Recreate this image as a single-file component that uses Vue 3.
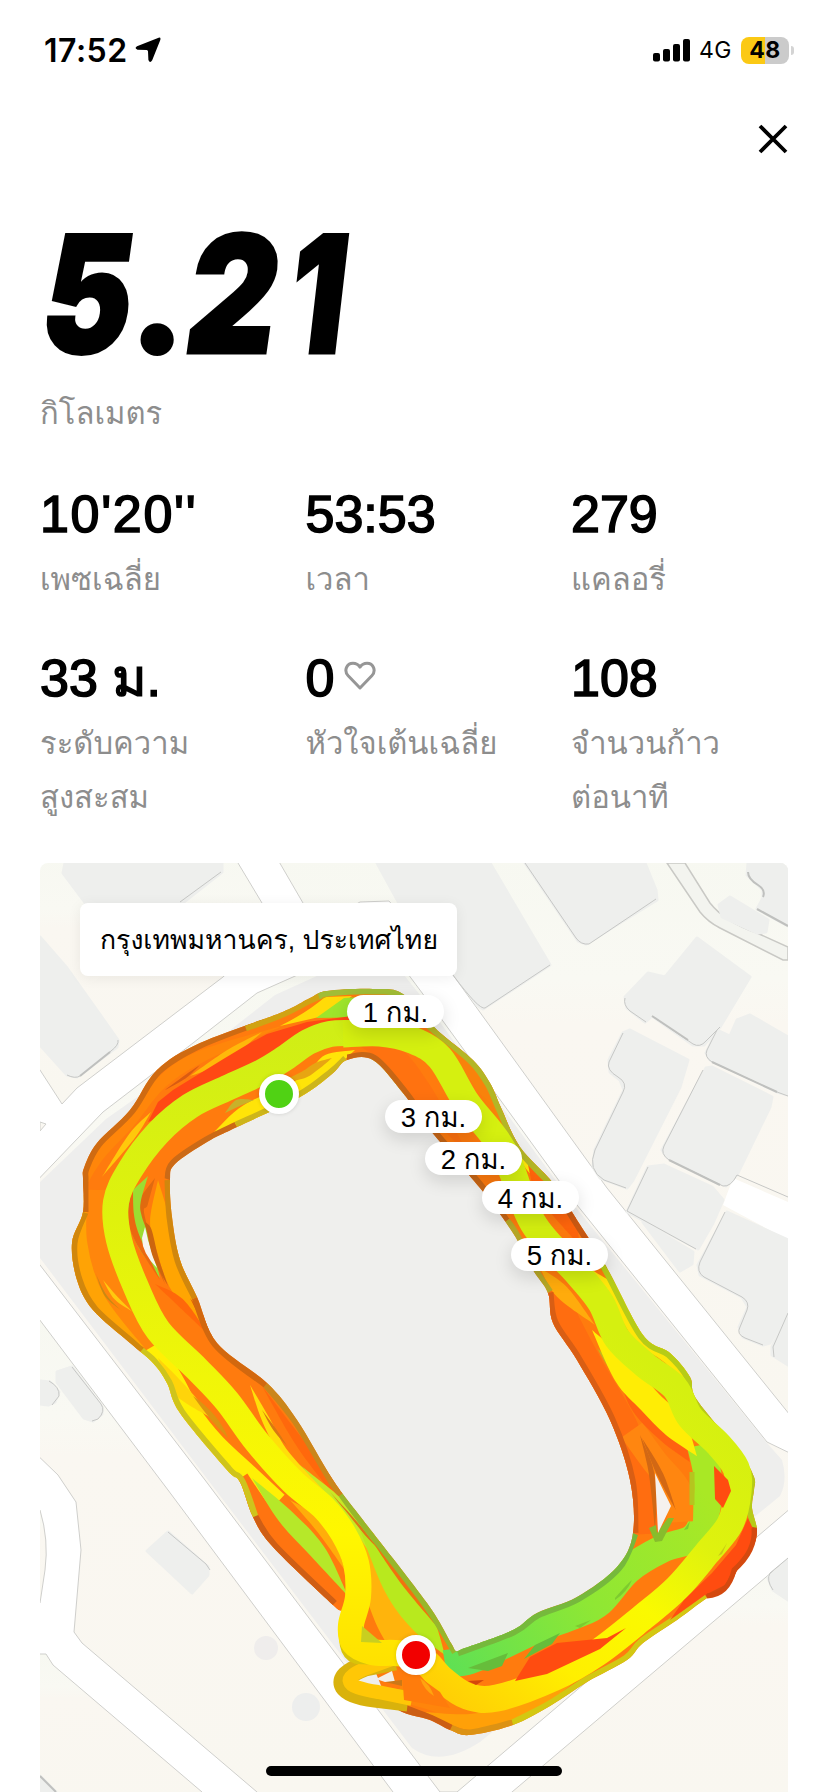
<script setup>
const stats = [
  { value: "10'20''", wide: true, label: ['เพซเฉลี่ย'] },
  { value: '53:53', label: ['เวลา'] },
  { value: '279', label: ['แคลอรี่'] },
  { value: '33 ม.', label: ['ระดับความ', 'สูงสะสม'] },
  { value: '0', heart: true, label: ['หัวใจเต้นเฉลี่ย'] },
  { value: '108', label: ['จำนวนก้าว', 'ต่อนาที'] },
]

const pins = [
  { text: '1 กม.', x: 307, y: 132 },
  { text: '3 กม.', x: 345, y: 237 },
  { text: '2 กม.', x: 385, y: 279 },
  { text: '4 กม.', x: 442, y: 318 },
  { text: '5 กม.', x: 471, y: 375 },
]

const parse = (str) => str.trim().split(/\s+/).map((s) => s.split(',').map(Number))

// Smooth curve (Catmull-Rom) through a flat "x,y x,y" list
function curve(str, closed = false) {
  const p = typeof str === 'string' ? parse(str) : str
  const n = p.length
  const at = (i) => (closed ? p[(i + n) % n] : p[Math.max(0, Math.min(n - 1, i))])
  let d = `M${p[0]}`
  for (let i = 0; i < (closed ? n : n - 1); i++) {
    const [a, b, c, e] = [at(i - 1), at(i), at(i + 1), at(i + 2)]
    d += `C${b[0] + (c[0] - a[0]) / 6},${b[1] + (c[1] - a[1]) / 6} ${c[0] - (e[0] - b[0]) / 6},${c[1] - (e[1] - b[1]) / 6} ${c[0]},${c[1]}`
  }
  return closed ? d + 'Z' : d
}

// Brush stroke that narrows to a point at both ends
function taper(str, width) {
  const p = parse(str)
  const n = p.length
  const side = (sign) =>
    p.map((q, i) => {
      const a = p[Math.max(0, i - 1)]
      const b = p[Math.min(n - 1, i + 1)]
      const len = Math.hypot(b[0] - a[0], b[1] - a[1])
      const h = (i === 0 || i === n - 1 ? 0 : width / 2) * sign
      return [q[0] - ((b[1] - a[1]) / len) * h, q[1] + ((b[0] - a[0]) / len) * h]
    })
  return curve(side(1)) + curve(side(-1).reverse()).replace('M', 'L') + 'Z'
}

const outer = curve('327,991 373,989 403,994 437,1030 473,1060 490,1083 502,1110 520,1147 553,1183 577,1220 607,1268 643,1335 670,1353 690,1377 697,1400 740,1453 754,1477 754,1490 752,1508 757,1530 753,1547 740,1565 727,1588 707,1598 677,1620 643,1643 627,1660 587,1682 550,1706 513,1725 470,1735 450,1730 430,1720 393,1706 370,1660 345,1615 333,1605 273,1547 253,1517 240,1482 227,1470 180,1413 167,1383 153,1363 130,1343 93,1310 77,1280 72,1243 83,1212 83,1180 84,1168 97,1143 130,1110 157,1070 200,1043 280,1013 310,998', true)
const inner = curve('347,1060 373,1060 403,1093 430,1130 480,1188 513,1233 533,1270 548,1293 553,1323 577,1360 610,1420 630,1480 633,1533 617,1567 577,1597 537,1613 513,1630 465,1648 456,1651 451,1643 427,1603 363,1520 333,1480 297,1420 267,1383 217,1343 197,1297 180,1260 172,1217 170,1180 175,1164 207,1142 237,1127 300,1097 332,1074', true)

const buildings = [
  '65,863 63,873 87,905 180,905 222,872 222,863',
  '40,937 67,968 118,1040 117,1047 77,1077 67,1075 40,1045',
  '377,863 490,863 550,965 483,1009 478,1006 453,972 400,905',
  '525,863 578,941 586,944 657,900 656,890 645,863',
  '748,863 747,875 763,890 763,898 757,909 788,926 788,863',
  '719,905 730,897 768,920 766,932 757,933 722,917',
  '697,938 750,977 720,1027 704,1045 693,1045 652,1016 645,1022 627,1008 625,997 648,973 665,977',
  '630,1030 688,1060 680,1087 633,1180 627,1188 600,1178 593,1167 595,1150 624,1090 620,1080 610,1072 609,1060 623,1033',
  '737,1020 750,1015 788,1037 788,1095 777,1092 710,1060 706,1053 717,1030 730,1036',
  '706,1068 712,1067 772,1097 770,1107 737,1175 726,1186 667,1157 662,1150',
  '648,1167 664,1165 712,1187 723,1200 713,1223 698,1249 627,1212',
  '643,1222 693,1252 692,1264 680,1271',
  '727,1212 788,1240 788,1310 770,1343 763,1345 743,1337 739,1327 748,1307 742,1297 700,1275 698,1265',
  '788,1313 772,1347 772,1355 788,1365',
  '788,1560 768,1578 773,1590 788,1600',
  '57,1372 72,1367 102,1407 102,1414 93,1421 84,1418 57,1382',
  '40,1381 50,1382 59,1392 55,1402 48,1405 40,1404',
  '147,1551 168,1532 208,1567 208,1575 192,1593',
  '40,1776 56,1792 40,1792',
]

const edges = [
  'M180 902L221 872', 'M118 1040Q119 1045 111 1051L80 1076Q75 1079 67 1075',
  'M525 863L576 938Q581 945 589 944L656 899', 'M550 965L485 1008Q479 1010 453 975',
  'M625 998Q623 1005 630 1011L646 1022', 'M652 1016L693 1044Q700 1048 706 1041L720 1027',
  'M623 1033L609 1062Q606 1070 618 1077Q628 1083 623 1092L595 1150Q587 1170 604 1180L626 1188',
  'M717 1030L707 1050Q704 1057 712 1062L777 1092L788 1096', 'M703 1070L664 1146Q660 1154 669 1160L723 1186Q731 1187 737 1175',
  'M648 1167L627 1211L696 1249', 'M725 1212L700 1262Q696 1272 704 1277L742 1297Q750 1302 747 1310L740 1327Q736 1334 745 1338L763 1345',
  'M788 1313L773 1347L774 1357', 'M72 1367L101 1404Q106 1411 98 1419L92 1421', 'M49 1381Q60 1387 59 1396L52 1405',
  'M168 1532L206 1564L210 1570', 'M737 1175L788 1197', 'M788 1558L770 1573Q766 1580 773 1590',
]
const heavyEdges = ['M748 872Q748 879 758 885Q766 890 763 897', 'M757 909L788 926', 'M652 1016L688 1040', 'M712 1062L777 1092', 'M110 1052L80 1076', 'M669 1160L720 1185', 'M40 1776L56 1792']

// Route strands, painted back to front: [points, width, colour]
const strands = [
  ['80,1190 82,1212 80,1232 80,1262 92,1292 125,1324 150,1350', 24, '#ffa305'],
  ['84,1190 98,1156 130,1121 160,1084 200,1057 285,1025', 12, '#ff860a'],
  ['101,1190 100,1240 116,1290 160,1346', 26, '#ff860c'],
  ['103,1280 116,1298 133,1312', 4, '#ffc90f'],
  ['96,1274 106,1296 122,1311', 2, '#c98a12'],
  ['158,1180 160,1220 166,1247 181,1287 205,1330', 20, '#ffa502'],
  ['155,1178 143,1203 140,1218 165,1284', 10, '#e06a10'],
  ['148,1176 134,1200 135,1218 144,1243 160,1278', 14, '#9cdd31'],
  ['133,1185 131,1215 138,1240 160,1280', 6, '#ec6810'],
  ['155,1284 180,1302 208,1334', 8, '#ff680a'],
  ['190,1298 205,1322 214,1342', 5, '#dd5c0b'],
  ['150,1348 172,1386 188,1416 212,1446 246,1478 275,1505', 28, '#fff005'],
  ['158,1358 178,1388 215,1420', 14, '#ffd40a'],
  ['262,1386 300,1443 335,1490 375,1550', 9, '#ff680c'],
  ['250,1385 266,1420 283,1451 312,1483 355,1520', 8, '#ffdf0a'],
  ['262,1410 275,1430 288,1447', 3, '#d97812'],
  ['235,1482 260,1518 296,1556 345,1605', 30, '#ff7410'],
  ['252,1478 285,1516 318,1552 348,1596', 16, '#b6e829'],
  ['290,1500 322,1528 345,1570', 12, '#ffad0a'],
  ['362,1535 378,1580 393,1620 412,1652', 34, '#ffb40c'],
  ['300,1465 345,1508 370,1545 405,1600', 9, '#c8e825'],
  ['330,1492 372,1543 408,1606', 3, '#dc7814'],
  ['360,1530 395,1585 422,1622 445,1655', 24, '#b8e91e'],
  ['370,1538 405,1582 440,1630', 8, '#f1720e'],
  ['445,1664 470,1660 497,1648 537,1629 575,1615 600,1602 628,1570 662,1549 693,1538 705,1515 708,1480 701,1445', 28, 'url(#greenRun)'],
  ['400,1687 435,1697 465,1707 515,1697', 28, '#ff850b'],
  ['425,1712 470,1722 520,1712 575,1682', 16, '#ffa008'],
  ['552,1290 568,1325 592,1370 625,1428 643,1485 646,1534', 27, '#ff6d10'],
  ['632,1430 655,1462 678,1490 680,1522', 26, '#ff8610'],
  ['615,1360 640,1400 670,1433 690,1462', 24, '#ff6210'],
  ['597,1348 615,1370 643,1402', 7, '#c6b51c'],
  ['540,1268 562,1292 595,1325', 14, '#ffab0c'],
  ['592,1330 625,1374 650,1402 675,1427 697,1456', 24, '#ffed05'],
  ['592,1270 621,1300 643,1336 672,1357 694,1392', 18, '#ffe60a'],
  ['440,1032 463,1060 486,1090 508,1130 520,1150', 14, '#f9820b'],
  ['514,1148 532,1169 552,1192', 9, '#ffe609'],
  ['528,1165 545,1186 562,1208 580,1246', 24, '#ff650c'],
  ['368,1056 392,1078 410,1112', 10, '#b5bf25'],
  ['360,1046 390,1055 420,1090 470,1157', 22, '#ff7210'],
]

// Darker rim of the outermost strands
const rims = [
  ['83,1212 83,1180 84,1168 97,1143 130,1110 157,1070 200,1043 265,1018', '#cf6b12'],
  ['245,1026 280,1013 310,998 327,991', '#d0a313'],
  ['318,994 327,991 373,989 403,994 437,1030', '#a1bd36'],
  ['430,1024 437,1030 473,1060 490,1083 502,1110 520,1147 553,1183', '#b3b625'],
  ['553,1183 577,1220 607,1268', '#ca5912'],
  ['592,1245 607,1268 643,1335 670,1353 690,1377 697,1400 740,1453 754,1477 754,1490 752,1508 757,1530', '#b6cc17'],
  ['757,1528 753,1547 740,1565 727,1588 707,1598', '#d34c12'],
  ['707,1598 677,1620 643,1643 627,1660 587,1682 550,1706 513,1725', '#d3c812'],
  ['513,1725 470,1735 450,1730', '#dc9214'],
  ['450,1730 430,1720 393,1706', '#cc5e14'],
  ['333,1605 273,1547 253,1517', '#cf5e15'],
  ['253,1517 240,1482 227,1470 180,1413 167,1383 153,1363 140,1352', '#cfc41c'],
  ['140,1352 130,1343 93,1310 77,1280 72,1243 83,1212', '#d1870d'],
  ['347,1060 373,1060 403,1093 430,1130 480,1188 505,1222', '#c76616'],
  ['505,1222 513,1233 533,1270 548,1293', '#b6a827'],
  ['548,1293 553,1323 577,1360 610,1420 630,1480 633,1533', '#d95e14'],
  ['633,1533 617,1567 577,1597 537,1613 513,1630 457,1651', '#76b93c'],
  ['457,1651 427,1603 363,1520 343,1493', '#97b72b'],
  ['343,1493 333,1480 297,1420 267,1383', '#ca861b'],
  ['267,1383 217,1343 197,1297', '#d2680e'],
  ['197,1297 180,1260 172,1217 170,1180', '#d1870d'],
  ['170,1180 175,1164 207,1142 237,1127', '#cb6a17'],
  ['237,1127 300,1097 332,1074 347,1060', '#cdb51b'],
]

const lime = curve('343,1034 380,1033 412,1040 440,1058 467,1103 503,1150 533,1223 577,1273 601,1303 617,1338 645,1365 675,1388 690,1417 718,1444 736,1468 738,1492 730,1524 707,1553 677,1588 643,1617 597,1653 553,1678 497,1698 467,1696 443,1680 428,1664 416,1655')
const west = curve('352,1033 330,1034 308,1042 285,1058 262,1072 227,1088 190,1106 158,1133 130,1170 116,1202 119,1240 136,1287 158,1330 197,1369 227,1401 257,1442 293,1482 323,1507 343,1533 356,1563 358,1597 351,1625 354,1643 372,1652 395,1653 416,1655')
const redPatches = [
  '148,1122 158,1102 173,1090 225,1058 250,1043 267,1034 307,1022 352,1016 352,1030 307,1040 280,1057 240,1075 200,1095 173,1112',
  '515,1681 530,1657 557,1643 607,1638 626,1628 600,1649 547,1674',
  '748,1518 755,1533 751,1547 737,1564 725,1585 705,1595 670,1620 684,1600 712,1573 736,1545',
  '714,1466 728,1480 731,1491 723,1508 715,1499',
]
</script>

<template>
  <main class="screen">
    <header class="status">
      <div class="clock">
        <span class="time">17:52</span>
        <svg class="arrow" width="26" height="26" viewBox="0 0 26 26"><path d="M23 .9Q26.2-.2 25.3 3L17.2 23.2Q15 26.8 13.4 23L13 14.2Q12.9 13 11.7 12.9L2.5 12.7Q-1.1 11.4 2 9.3Z" /></svg>
      </div>
      <div class="indicators">
        <svg width="38" height="24" viewBox="0 0 38 24"><rect y="15" width="7" height="8.5" rx="2" /><rect x="10" y="11" width="7" height="12.5" rx="2" /><rect x="20" y="6" width="7" height="17.5" rx="2" /><rect x="30" y="1" width="7" height="22.5" rx="2" /></svg>
        <span class="network">4G</span>
        <span class="battery">48</span>
        <i class="nub"></i>
      </div>
    </header>

    <div class="toolbar">
      <svg width="30" height="30" viewBox="0 0 30 30"><path d="M2 2L28 28M28 2L2 28" fill="none" stroke="#000" stroke-width="3.8" /></svg>
    </div>

    <section class="distance">
      <svg class="big" width="340" height="150" viewBox="36 217 340 150">
        <g class="digits">
          <text transform="translate(81 353) skewX(-8) scale(.82 1)">5</text>
          <text class="dot" transform="translate(157 352)">.</text>
          <text transform="translate(226 353) skewX(-8) scale(.85 1)">2</text>
          <text transform="translate(312 353) skewX(-6.6) scale(.76 1)">1</text>
        </g>
      </svg>
      <p class="label">กิโลเมตร</p>
    </section>

    <section class="stats">
      <div v-for="s in stats" :key="s.label[0]" class="stat">
        <div class="value" :class="{ wide: s.wide }">
          <span>{{ s.value }}</span>
          <svg v-if="s.heart" class="heart" width="32" height="30" viewBox="0 0 32 30"><path d="M16 27L4.2 14.8C-.5 9.7 2.6 2.2 9 2.2C12 2.2 14.4 3.6 16 6.1C17.6 3.6 20 2.2 23 2.2C29.4 2.2 32.5 9.7 27.8 14.8Z" fill="none" stroke="#969696" stroke-width="3" stroke-linejoin="round" /></svg>
        </div>
        <p v-for="line in s.label" :key="line" class="label">{{ line }}</p>
      </div>
    </section>

    <section class="map">
      <svg class="canvas" width="748" height="929" viewBox="40 863 748 929">
        <defs>
          <clipPath id="track"><path :d="outer + inner" clip-rule="evenodd" /></clipPath>
          <linearGradient id="land" x1="0" y1="0" x2="0" y2="1"><stop offset="0" stop-color="#f7f8f1" /><stop offset=".22" stop-color="#f9f9f3" /><stop offset=".3" stop-color="#faf7f1" /><stop offset="1" stop-color="#f9f7f0" /></linearGradient>
          <linearGradient id="greenRun" gradientUnits="userSpaceOnUse" x1="445" y1="1665" x2="710" y2="1500"><stop offset="0" stop-color="#5fe054" /><stop offset=".5" stop-color="#8fe734" /><stop offset="1" stop-color="#a9e825" /></linearGradient>
          <linearGradient id="eastRun" gradientUnits="userSpaceOnUse" x1="700" y1="1400" x2="450" y2="1700"><stop offset="0" stop-color="#d5f010" /><stop offset=".28" stop-color="#dff20e" /><stop offset=".5" stop-color="#fafa00" /><stop offset=".75" stop-color="#ffef00" /><stop offset="1" stop-color="#ffcf05" /></linearGradient>
          <linearGradient id="westRun" gradientUnits="userSpaceOnUse" x1="0" y1="1030" x2="0" y2="1660"><stop offset="0" stop-color="#d0ee16" /><stop offset=".3" stop-color="#dff20d" /><stop offset=".55" stop-color="#f0f608" /><stop offset=".8" stop-color="#fff700" /><stop offset="1" stop-color="#ffe200" /></linearGradient>
        </defs>
        <rect x="40" y="863" width="748" height="929" fill="#fff" />
        <g fill="url(#land)" stroke="#cfcfcc" stroke-width="1">
          <path d="M30 853H232L262 903L275 930L223 977L77 1088L62 1104L40 1070L30 1058Z" />
          <path d="M274 853L303 903L320 925L360 902L389 901L453 975L607 1188L798 1425V853Z" />
          <path d="M30 1307L168 1490L393 1792L400 1802H268L257 1792L82 1643L74 1632L81 1550L76 1502L58 1475L30 1448Z" />
          <path d="M30 1500L40 1510Q49 1540 45 1570L40 1603L30 1610Z" />
          <path d="M30 1654H46L53 1665L202 1792L212 1802H30Z" />
          <path d="M798 1550L512 1792L500 1802H798Z" />
          <path d="M40 1122L46 1124L40 1131Z" />
          <path d="M30 1188L103 1112L193 1043L257 993L293 977L340 955L408 974L440 1017L573 1200L767 1442L798 1457V1502L457 1792H440L205 1480L30 1252Z" />
        </g>
        <path d="M40 1182L106 1119L210 1046L275 995L330 970H400L420 995L573 1204L767 1443L782 1460Q788 1480 780 1496L480 1742Q440 1768 412 1748L208 1480L40 1258Z" fill="#eeeeed" />
        <path d="M667 863L700 912Q708 922 720 928L783 960H788V947L757 933Q725 922 710 903L685 863Z" fill="#f3f4ef" stroke="#c9c9c5" stroke-width="1.5" />
        <path d="M733 1178L788 1202V1240L723 1205Z" fill="#fff" />
        <polygon v-for="b in buildings" :key="b" :points="b" class="building" />
        <circle cx="266" cy="1648" r="12" fill="#efedec" /><circle cx="306" cy="1707" r="14" fill="#edeeed" />
        <g fill="none" stroke="#c6c7c5" stroke-width="1"><path v-for="e in edges" :key="e" :d="e" /><path v-for="e in heavyEdges" :key="e" :d="e" stroke-width="2" stroke="#bfc0be" /></g>
        <path :d="inner" fill="#efefed" />

        <path :d="outer + inner" fill="#ff7b0e" fill-rule="evenodd" />
        <g clip-path="url(#track)" fill="none" stroke-linejoin="round">
          <template v-for="s in strands" :key="s[0]">
            <path v-if="s[1] > 24" :d="curve(s[0])" :stroke-width="s[1]" :stroke="s[2]" />
            <path v-else :d="taper(s[0], s[1])" :fill="s[2]" />
          </template>
          <path :d="taper('355,1050 330,1062 315,1078 296,1090 247,1113 214,1132', 17)" fill="#ffe408" />
          <path :d="taper('332,1058 317,1066 303,1075 280,1082', 7)" fill="#e7a512" />
          <path :d="taper('225,1113 238,1103 254,1100', 7)" fill="#c8b22a" />
          <path :d="taper('151,1112 132,1136 102,1177', 7)" fill="#ffc80b" />
          <path :d="taper('262,1032 235,1050 215,1063 190,1076', 8)" fill="#ffb80a" />
          <path d="M280 1026Q308 1012 325 997L352 996L328 1015Z" fill="#ffdb08" />
          <path d="M316 1018L344 998L398 995L425 1023L380 1017Z" fill="#9ee52b" />
          <path :d="taper('200,1065 185,1077 165,1090', 3)" fill="#da5b12" />
          <path v-for="r in rims" :key="r[0]" :d="curve(r[0])" :stroke="r[1]" stroke-width="11" />
        </g>
        <polygon :points="redPatches[0]" fill="#ff4814" />
        <g fill="none" stroke-linejoin="round">
          <path d="M395 1660L365 1666Q339 1676 345 1686Q350 1694 375 1697L408 1701" stroke="#d9b20c" stroke-width="21" />
          <path d="M395 1658L370 1667Q347 1675 350 1682Q352 1688 378 1692L412 1699" stroke="#ffc706" stroke-width="14" />
          <path d="M352 1612Q342 1650 357 1655L380 1656" stroke="#d8c309" stroke-width="18" />
          <path :d="west" stroke="url(#westRun)" stroke-width="26" />
          <path :d="lime" stroke="url(#eastRun)" stroke-width="27" />
        </g>
        <polygon v-for="r in redPatches.slice(1)" :key="r" :points="r" fill="#ff4c10" />
        <path d="M707 1596Q728 1595 734 1570Q756 1551 754 1528" fill="none" stroke="#d4490f" stroke-width="5" />
        <path d="M193 1396Q219 1414 228 1438Q211 1422 193 1396Z" fill="#dc9410" />
        <path d="M468 1668L508 1653L502 1666L488 1671ZM524 1659L535 1645L560 1633L552 1644Z" fill="#66bd3b" />
        <path d="M615 1598Q628 1583 632 1580Q627 1592 615 1600ZM575 1626L591 1620L580 1628ZM684 1530L690 1521L688 1529Z" fill="#7dcb2f" />
        <path d="M468 1681L484 1680L476 1685Z" fill="#d4470b" />
        <path d="M718 1556L727 1543L722 1554Z" fill="#c9cc16" />
        <path d="M692 1472V1505" stroke="#b5c51f" stroke-width="5" />
        <path :d="taper('640,1435 650,1466 654,1495 655,1530', 5)" fill="#d26814" />
        <path :d="taper('642,1438 660,1474 676,1510', 6)" fill="#d26814" />
        <path d="M649 1528L655 1542L662 1541L674 1518L668 1518L657 1533L656 1525Z" fill="#87bd2c" />
        <path d="M655 1473Q663 1490 671 1506L658 1533Z" fill="#f5f1ee" />
        <path d="M145 1227L148 1240L157 1268Q142 1253 142 1238Z" fill="#f8f4ee" />
        <path :d="taper('145,1222 149,1230 156,1258 168,1286', 5)" fill="#cc650f" />
        <path d="M376 1679L392 1671L395 1682L385 1682Z" fill="#f3eee7" />
        <path d="M385 1682L402 1680L402 1686Z" fill="#cb7817" />
        <path d="M402 1672L418 1676L440 1692L450 1708L404 1700Z" fill="#ff7c0c" />
        <path d="M420 1678Q430 1684 434 1696Q424 1690 420 1678Z" fill="#ffa40f" />
        <path d="M362 1626L382 1643L361 1642Z" fill="#c8cf20" />
      </svg>
      <i class="marker start"></i>
      <i class="marker finish"></i>
      <span v-for="p in pins" :key="p.text" class="pin" :style="{ left: p.x + 'px', top: p.y + 'px' }">{{ p.text }}</span>
      <div class="place">กรุงเทพมหานคร, ประเทศไทย</div>
    </section>
    <div class="home"></div>
  </main>
</template>

<style>
body { margin: 0; background: #fff; }
</style>

<style scoped>
.screen { position: relative; box-sizing: border-box; width: 828px; height: 1792px; padding: 0 40px; overflow: hidden; background: #fff; color: #000; font-family: "Liberation Sans", Loma, Garuda, "Noto Sans Thai Looped", sans-serif; display: flex; flex-direction: column; }
p { margin: 0; }
.status { height: 100px; display: flex; justify-content: space-between; align-items: center; margin: 0 -6px 0 4px; font-family: Inter, sans-serif; flex: none; }
.clock { display: flex; align-items: center; gap: 7px; }
.time { font-size: 32px; font-weight: 600; letter-spacing: 0.5px; }
.indicators { display: flex; align-items: center; }
.network { margin-left: 8px; font-size: 23px; width: 42px; letter-spacing: 0.4px; }
.battery { width: 48px; height: 27px; border-radius: 8px; background: linear-gradient(90deg, #fbc914 50%, #cbcbcb 50%); font-weight: 700; font-size: 23px; line-height: 27px; text-align: center; letter-spacing: 0.6px; }
.nub { width: 3px; height: 9px; margin-left: 2px; border-radius: 0 3px 3px 0; background: #d4d4d4; }
.toolbar { height: 78px; display: flex; justify-content: flex-end; align-items: center; flex: none; }
.distance { height: 288px; padding-top: 39px; box-sizing: border-box; flex: none; }
.big { display: block; margin-left: -4px; overflow: visible; }
.digits { font-family: Inter, sans-serif; font-weight: 900; font-size: 163px; text-anchor: middle; stroke: #000; stroke-width: 3px; }
.dot { font-family: Lato, sans-serif; font-size: 167px; stroke-width: 6px; }
.label { font-size: 31px; line-height: 54px; color: #8d8d8d; white-space: nowrap; }
.distance .label { margin-top: 20px; }
.stats { display: grid; grid-template-columns: 265.5px 265.5px 1fr; grid-template-rows: 164px 233px; flex: none; }
.stat { padding-top: 18px; }
.value { display: flex; align-items: center; height: 60px; margin-bottom: 9px; font-size: 52px; line-height: 60px; -webkit-text-stroke: 1.6px #000; white-space: nowrap; font-kerning: none; }
.wide { letter-spacing: 1.7px; }
.heart { margin-left: 10px; margin-top: -4px; }
.map { position: relative; height: 929px; border-radius: 8px 8px 0 0; overflow: hidden; flex: none; }
.canvas { display: block; }
.building { fill: #eeefed; stroke: #eeefed; stroke-width: 3; stroke-linejoin: round; }
.marker { position: absolute; box-sizing: border-box; width: 40px; height: 40px; border: 6px solid #fff; border-radius: 50%; box-shadow: 0 0 4px #0002; }
.start { left: 219px; top: 211px; background: #50d214; }
.finish { left: 356px; top: 772px; background: #f20000; }
.pin { position: absolute; width: 97px; height: 33px; border-radius: 17px; background: #fff; font-size: 27.5px; line-height: 35px; text-align: center; white-space: nowrap; box-shadow: 0 6px 18px #0002; }
.place { position: absolute; left: 40px; top: 40px; width: 377px; height: 73px; box-sizing: border-box; padding-left: 20px; border-radius: 8px; background: #fff; font-size: 26.6px; line-height: 75px; white-space: nowrap; box-shadow: 0 2px 14px #0001; }
.home { position: absolute; left: 266px; top: 1766px; width: 296px; height: 10px; border-radius: 5px; background: #000; }
</style>
